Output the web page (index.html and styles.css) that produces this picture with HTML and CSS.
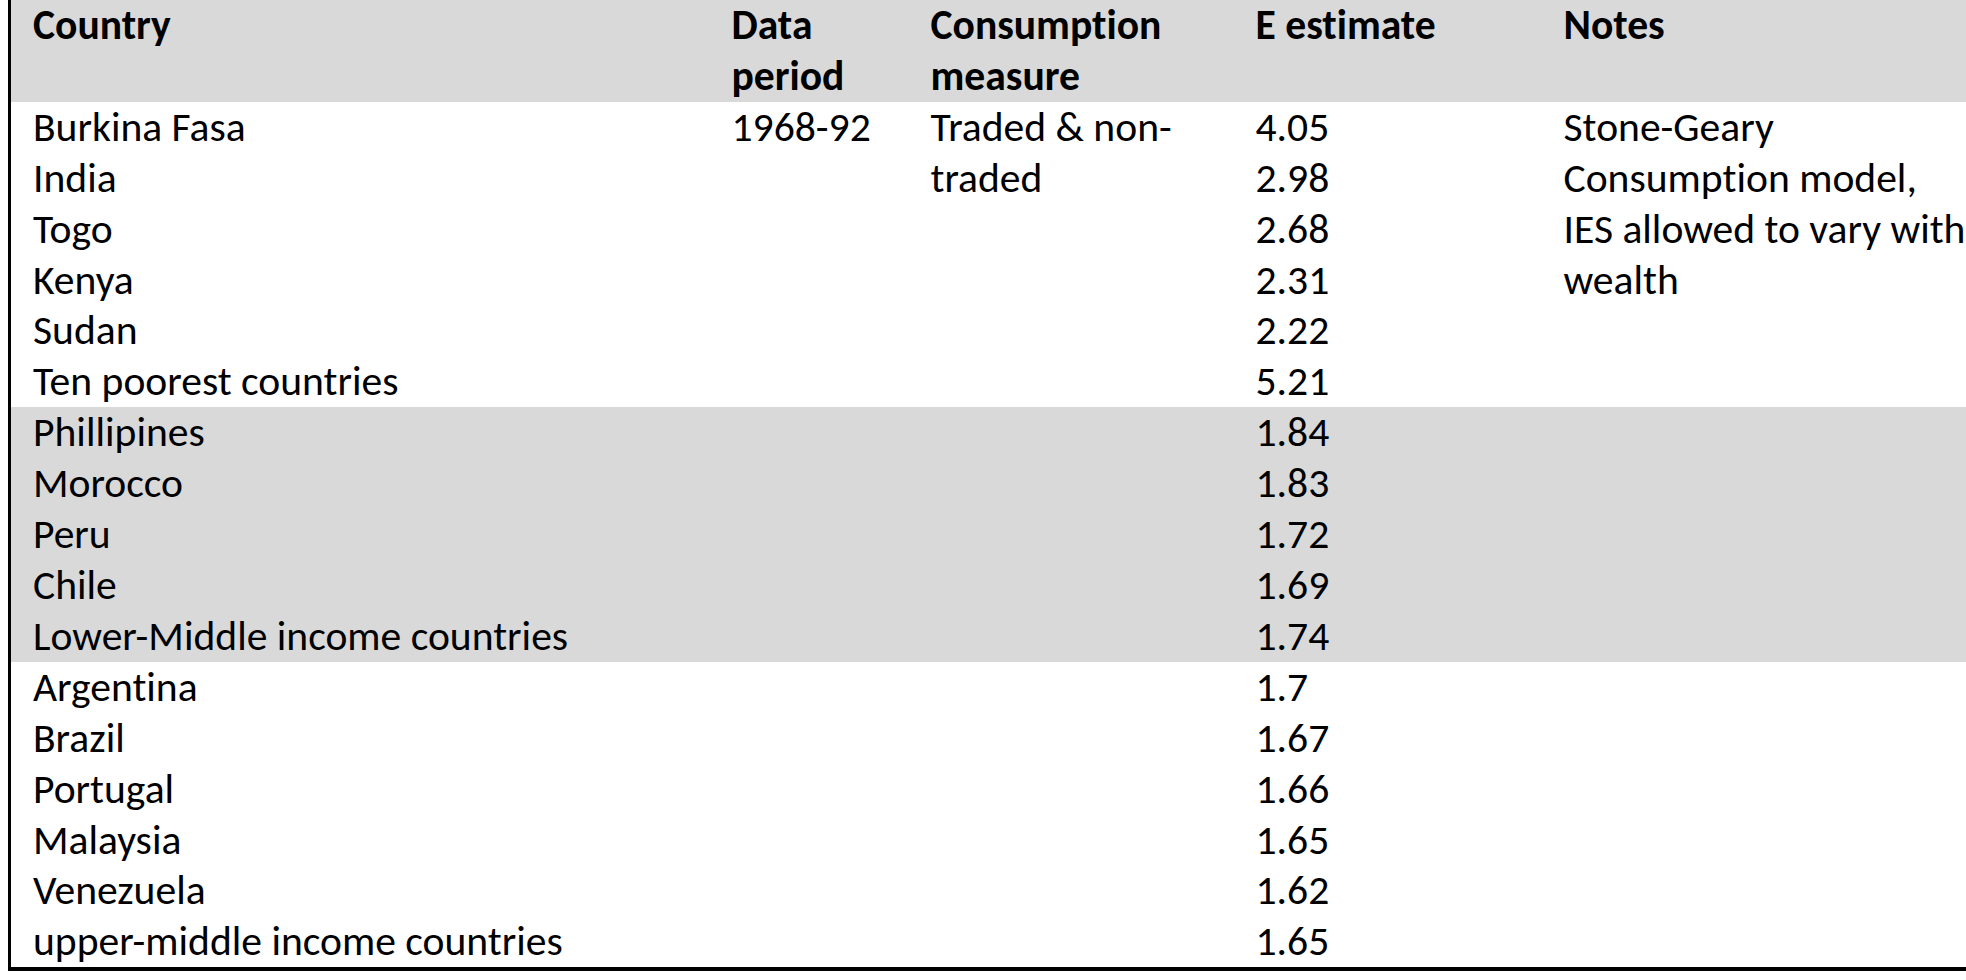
FILE: index.html
```html
<!DOCTYPE html>
<html lang="en">
<head>
<meta charset="utf-8">
<title>Elasticity estimates</title>
<link rel="stylesheet" href="styles.css">
</head>
<body>
<table class="data">
  <colgroup>
    <col class="c-country">
    <col class="c-period">
    <col class="c-measure">
    <col class="c-est">
    <col class="c-notes">
  </colgroup>
  <thead>
    <tr class="head">
      <th>Country</th>
      <th>Data<br>period</th>
      <th>Consumption<br>measure</th>
      <th>E estimate</th>
      <th>Notes</th>
    </tr>
  </thead>
  <tbody>
    <tr><td>Burkina Fasa</td><td rowspan="6">1968-92</td><td rowspan="6">Traded &amp; non-<br>traded</td><td>4.05</td><td rowspan="6">Stone-Geary<br>Consumption model,<br>IES allowed to vary with<br>wealth</td></tr>
    <tr><td>India</td><td>2.98</td></tr>
    <tr><td>Togo</td><td>2.68</td></tr>
    <tr><td>Kenya</td><td>2.31</td></tr>
    <tr><td>Sudan</td><td>2.22</td></tr>
    <tr><td>Ten poorest countries</td><td>5.21</td></tr>
  </tbody>
  <tbody class="shaded">
    <tr><td>Phillipines</td><td></td><td></td><td>1.84</td><td></td></tr>
    <tr><td>Morocco</td><td></td><td></td><td>1.83</td><td></td></tr>
    <tr><td>Peru</td><td></td><td></td><td>1.72</td><td></td></tr>
    <tr><td>Chile</td><td></td><td></td><td>1.69</td><td></td></tr>
    <tr><td>Lower-Middle income countries</td><td></td><td></td><td>1.74</td><td></td></tr>
  </tbody>
  <tbody>
    <tr><td>Argentina</td><td></td><td></td><td>1.7</td><td></td></tr>
    <tr><td>Brazil</td><td></td><td></td><td>1.67</td><td></td></tr>
    <tr><td>Portugal</td><td></td><td></td><td>1.66</td><td></td></tr>
    <tr><td>Malaysia</td><td></td><td></td><td>1.65</td><td></td></tr>
    <tr><td>Venezuela</td><td></td><td></td><td>1.62</td><td></td></tr>
    <tr><td>upper-middle income countries</td><td></td><td></td><td>1.65</td><td></td></tr>
  </tbody>
</table>
</body>
</html>
```

FILE: styles.css
```css
html, body {
  margin: 0;
  padding: 0;
  background: #ffffff;
  overflow: hidden;
}

body {
  width: 1966px;
  height: 980px;
  font-family: Carlito, Calibri, Lato, "Liberation Sans", sans-serif;
  font-variant-ligatures: none;
  color: #000000;
}

.data {
  margin-left: 8px;
  border-collapse: collapse;
  table-layout: fixed;
  width: 1958px;
  border-left: 3px solid #000000;
  border-bottom: 4px solid #000000;
  font-size: 41.6px;
  line-height: 50.9px;
}

.c-country { width: 700px; }
.c-period { width: 199px; }
.c-measure { width: 325px; }
.c-est { width: 308px; }
.c-notes { width: auto; }

.data th,
.data td {
  padding: 0 0 0 22px;
  text-align: left;
  vertical-align: top;
  white-space: nowrap;
  height: 50.9px;
}

.data th {
  font-weight: 700;
  height: 101px;
}

.head {
  background: #d9d9d9;
}

.shaded {
  background: #d9d9d9;
}
```
